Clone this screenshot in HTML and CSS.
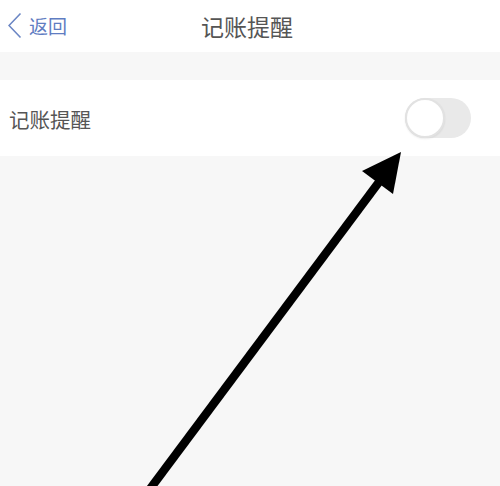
FILE: index.html
```html
<!DOCTYPE html>
<html lang="zh">
<head>
<meta charset="utf-8">
<link rel="stylesheet" href="styles.css">
</head>
<body>
<div class="page">
  <header class="nav">
    <div class="back">
      <svg class="chev" width="14" height="28" viewBox="0 0 14 28"><polyline points="12.5,1.5 1,13.5 12.5,25.5" fill="none" stroke="#6b86c4" stroke-width="1.6"/></svg>
      <span class="back-text">返回</span>
    </div>
    <div class="title">记账提醒</div>
  </header>
  <div class="gap"></div>
  <div class="row">
    <span class="label">记账提醒</span>
    <div class="switch"><div class="knob"></div></div>
  </div>
  <div class="rest"></div>
  <svg class="arrow" width="500" height="486" viewBox="0 0 500 486">
    <line x1="147" y1="493" x2="382" y2="178" stroke="#000" stroke-width="8.5"/>
    <polygon points="401,152 362,171 393,194" fill="#000"/>
  </svg>
</div>
</body>
</html>
```
FILE: styles.css
```css
html, body {
  margin: 0;
  padding: 0;
  background: #f7f7f7;
}
.page {
  position: relative;
  width: 500px;
  height: 486px;
  overflow: hidden;
  font-family: "Noto Sans CJK SC", "Noto Sans", sans-serif;
  background: #f7f7f7;
}
.nav {
  position: relative;
  height: 52px;
  background: #fff;
  display: flex;
  align-items: center;
  justify-content: center;
}
.back {
  position: absolute;
  left: 8px;
  top: 12px;
  display: flex;
  align-items: center;
  gap: 7px;
}
.chev {
  display: block;
}
.back-text {
  font-size: 19px;
  line-height: 28px;
  color: #5f7dc2;
}
.title {
  font-size: 23px;
  color: #555;
  line-height: 52px;
  margin-left: -6px;
}
.gap {
  height: 28px;
  background: #f7f7f7;
}
.row {
  height: 76px;
  background: #fff;
  display: flex;
  align-items: center;
  justify-content: space-between;
  padding: 0 29px 0 9px;
}
.label {
  font-size: 20.5px;
  color: #555;
  margin-top: 1px;
}
.switch {
  width: 66px;
  height: 40px;
  border-radius: 20px;
  background: #e9e9e9;
  position: relative;
}
.knob {
  position: absolute;
  left: 0;
  top: 0;
  width: 36px;
  height: 36px;
  border-radius: 50%;
  background: #fff;
  border: 2px solid #e2e2e2;
  box-shadow: 0 1px 2px rgba(0,0,0,0.08);
}
.rest {
  height: 330px;
  background: #f7f7f7;
}
.arrow {
  position: absolute;
  left: 0;
  top: 0;
}
```
